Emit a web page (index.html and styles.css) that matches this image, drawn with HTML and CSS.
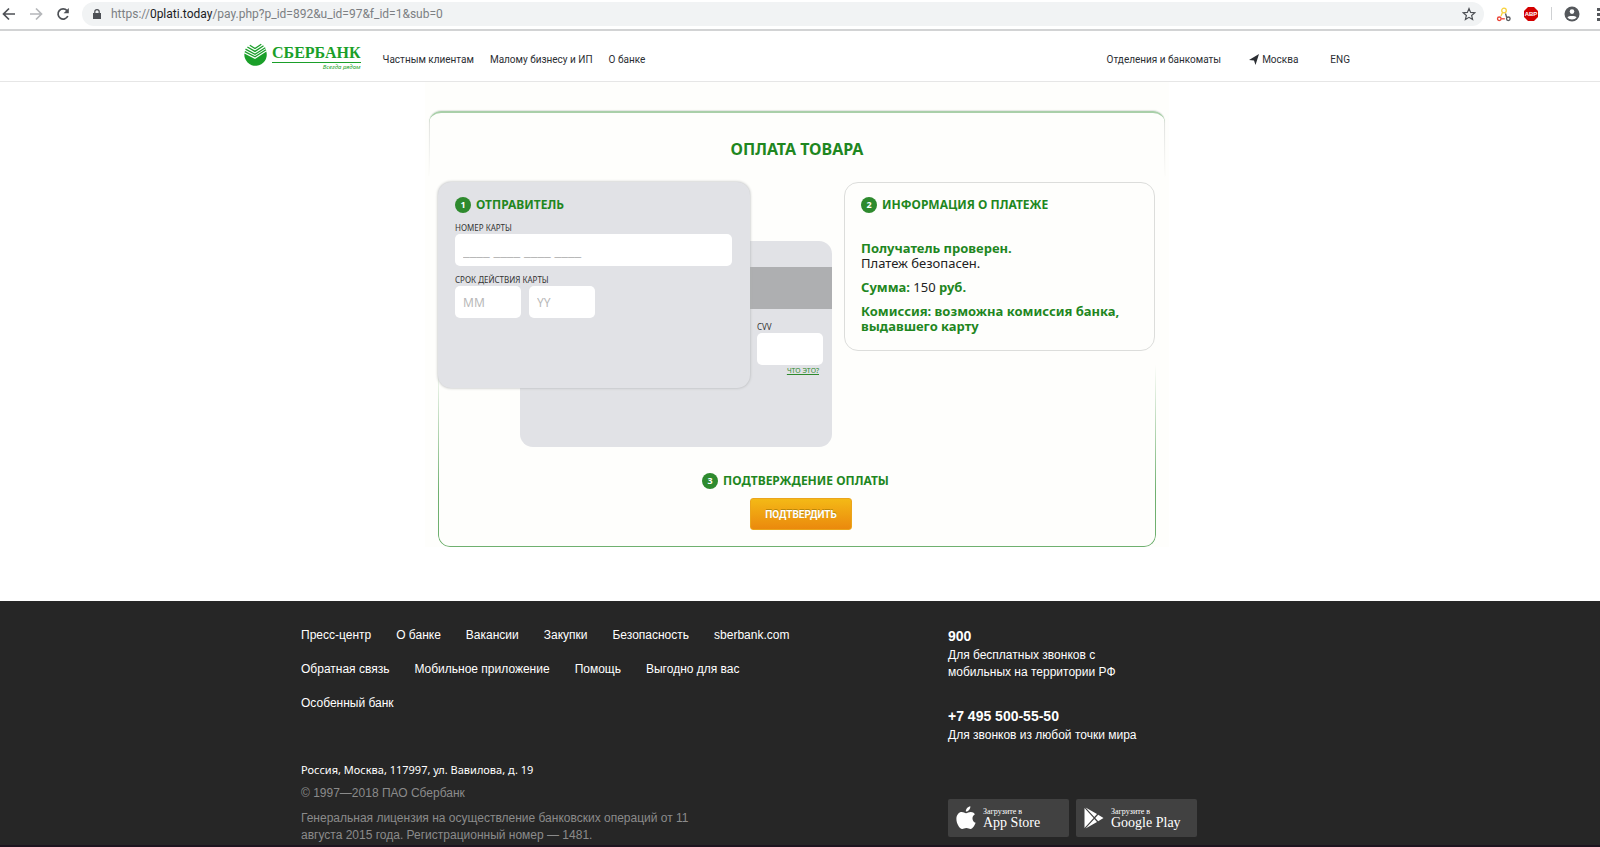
FILE: index.html
```html
<!DOCTYPE html>
<html lang="ru">
<head>
<meta charset="utf-8">
<title>Оплата товара</title>
<link rel="stylesheet" href="styles.css">
</head>
<body>
<div class="toolbar">
  <button class="tool" type="button" aria-label="Назад"><svg width="16" height="16" viewBox="0 0 16 16" fill="none" stroke="#4d5055" stroke-width="1.700"><path d="M14 8H3M8 2.500 2.500 8l5.500 5.500"/></svg></button>
  <button class="tool" type="button" aria-label="Вперёд"><svg width="16" height="16" viewBox="0 0 16 16" fill="none" stroke="#b5b7ba" stroke-width="1.700"><path d="M2 8h11M8 2.500 13.500 8 8 13.500"/></svg></button>
  <button class="tool" type="button" aria-label="Обновить"><svg width="16" height="16" viewBox="0 0 16 16" fill="none" stroke="#4d5055" stroke-width="1.700"><path d="M12.800 10A5.100 5.100 0 1 1 12 4.600"/><path d="M13.800 2v5.200H8.600z" fill="#4d5055" stroke="none"/></svg></button>
  <div class="address">
    <svg width="8" height="10" viewBox="0 0 8 10"><path d="M0 4h8v6H0z" fill="#4d5055"/><path d="M1.800 4.400V2.800a2.200 2.200 0 0 1 4.400 0v1.600" fill="none" stroke="#4d5055" stroke-width="1.200"/></svg>
    <span class="url">https://<b>0plati.today</b>/pay.php?p_id=892&amp;u_id=97&amp;f_id=1&amp;sub=0</span>
    <svg class="star" width="14" height="14" viewBox="0 0 24 24" fill="none" stroke="#4d5055" stroke-width="2"><path d="m12 2.600 2.800 6.600 7.100.6-5.400 4.700 1.700 7-6.200-3.800-6.200 3.800 1.700-7L2.100 9.800l7.100-.6z"/></svg>
  </div>
  <svg class="ext" width="16" height="16" viewBox="0 0 16 16" fill="none" stroke-width="1.300"><circle cx="8" cy="4.500" r="2.300" stroke="#f8d23c"/><path d="M6.500 6.500 5 10" stroke="#f8d23c"/><circle cx="3.300" cy="12.800" r="1.800" stroke="#ea4335"/><path d="M5.300 12.800h3.500" stroke="#ea4335"/><circle cx="12.300" cy="12.800" r="1.800" stroke="#55585c"/><path d="m9.500 7.500 1.200 4" stroke="#55585c"/></svg>
  <svg class="ext" width="16" height="16" viewBox="0 0 16 16"><path d="M5 1h6l4 4v6l-4 4H5l-4-4V5z" fill="#d40000"/><text class="abp" x="8" y="10" text-anchor="middle">ABP</text></svg>
  <span class="divider"></span>
  <svg class="user" width="16" height="16" viewBox="0 0 16 16"><circle cx="8" cy="8" r="7.500" fill="#55585c"/><circle cx="8" cy="5.600" r="2.300" fill="#fff"/><path d="M3.400 11.200c1-1.700 8.200-1.700 9.200 0-2 3-7.200 3-9.200 0z" fill="#fff"/></svg>
  <svg class="dots" width="3" height="14" viewBox="0 0 3 14" fill="#55585c"><path d="M0 1h3v3H0zM0 6h3v3H0zM0 11h3v3H0z"/></svg>
</div>

<header class="header">
  <div class="header-in">
    <a class="logo" href="#">
      <svg width="24" height="24" viewBox="0 0 24 24"><path d="M.4 10.500 11 16 22.300 8.500A11.200 11.200 0 1 1 .4 10.500z" fill="#1a9f29"/><g fill="none" stroke="#1a9f29" stroke-width="1.300"><path d="m.8 8.600 10.200 5.200L22 6.700M1.500 6.100l9.500 5.200 10.300-6.600M3.400 4l7.600 4.400 8.500-5.700M5.800 2.300 11 5.500 17.300 1.200"/></g></svg>
      <span class="logo-text"><span class="logo-name">СБЕРБАНК</span><span class="logo-tag">Всегда рядом</span></span>
    </a>
    <nav class="nav"><a href="#">Частным клиентам</a><a href="#">Малому бизнесу и ИП</a><a href="#">О банке</a></nav>
    <nav class="nav nav-right"><a href="#">Отделения и банкоматы</a><a class="city" href="#"><svg width="10" height="11" viewBox="0 0 10 11"><path d="M10 0 6.500 11 5 6.500 0 6z" fill="#2b2e33"/></svg>Москва</a><a href="#">ENG</a></nav>
  </div>
</header>

<main class="main">
  <div class="sheet">
    <div class="top-frame"><h1>ОПЛАТА ТОВАРА</h1></div>
    <form class="pay">
      <div class="row">
        <div class="cards">
          <section class="card back">
            <div class="stripe"></div>
            <div class="cvv">
              <label for="cvv">CVV</label>
              <input id="cvv" type="text" autocomplete="off">
              <a href="#">ЧТО ЭТО?</a>
            </div>
          </section>
          <section class="card front">
            <h2><span class="num">1</span>ОТПРАВИТЕЛЬ</h2>
            <label for="pan">НОМЕР КАРТЫ</label>
            <input id="pan" class="pan" type="text" placeholder="____ ____ ____ ____" autocomplete="off">
            <label for="mm">СРОК ДЕЙСТВИЯ КАРТЫ</label>
            <div class="dates">
              <input id="mm" type="text" placeholder="MM" autocomplete="off">
              <input id="yy" type="text" placeholder="YY" aria-label="Год" autocomplete="off">
            </div>
          </section>
        </div>
        <section class="info">
          <h2><span class="num">2</span>ИНФОРМАЦИЯ О ПЛАТЕЖЕ</h2>
          <p class="first"><b>Получатель проверен.</b><br>Платеж безопасен.</p>
          <p><b>Сумма:</b> 150 <b>руб.</b></p>
          <p><b>Комиссия: возможна комиссия банка, выдавшего карту</b></p>
        </section>
      </div>
      <div class="confirm">
        <h2><span class="num">3</span>ПОДТВЕРЖДЕНИЕ ОПЛАТЫ</h2>
        <button class="submit" type="button">ПОДТВЕРДИТЬ</button>
      </div>
    </form>
  </div>
</main>

<footer class="footer">
  <div class="footer-in">
    <div class="left">
      <nav class="links"><a href="#">Пресс-центр</a><a href="#">О банке</a><a href="#">Вакансии</a><a href="#">Закупки</a><a href="#">Безопасность</a><a href="#">sberbank.com</a><a href="#">Обратная связь</a><a href="#">Мобильное приложение</a><a href="#">Помощь</a><a href="#">Выгодно для вас</a><a href="#">Особенный банк</a></nav>
      <p class="addr">Россия, Москва, 117997, ул. Вавилова, д. 19</p>
      <p class="grey">© 1997—2018 ПАО Сбербанк</p>
      <p class="grey license">Генеральная лицензия на осуществление банковских операций от 11 августа 2015 года. Регистрационный номер — 1481.</p>
    </div>
    <div class="right">
      <p class="phone">900</p>
      <p class="note">Для бесплатных звонков с<br>мобильных на территории РФ</p>
      <p class="phone second">+7 495 500-55-50</p>
      <p class="note">Для звонков из любой точки мира</p>
      <div class="stores">
        <a class="store" href="#"><svg width="20" height="24" viewBox="0 0 20 24" fill="#fff"><path d="M10 7.200c1.500 0 2.600-1.200 4.800-1.200 1.700 0 3.200.9 4.100 2.200-3.600 2.100-3 7.100.7 8.600-.9 2.500-2.800 6-5 6.200-1.500 0-2.200-1-4.200-1s-2.800 1-4.200 1C3.400 22.900.4 17.400.4 13c0-4.300 2.600-7 5.300-7C7.500 6 8.900 7.200 10 7.200z"/><path d="M9.800 5.600C9.700 3 11.700.6 14.300.2 14.600 2.900 12.400 5.500 9.800 5.600z"/></svg><span class="store-text"><small>Загрузите в</small><span>App Store</span></span></a>
        <a class="store" href="#"><svg width="20" height="22" viewBox="0 0 20 22" fill="#fff"><path d="M.5 1v20L9.600 11z"/><path d="M1.500.4 10.300 10l2.700-3zM1.500 21.600 10.300 12l2.700 3zM14.200 7.700 11.200 11l3 3.300 5.300-3.300z"/></svg><span class="store-text"><small>Загрузите в</small><span>Google Play</span></span></a>
      </div>
    </div>
  </div>
</footer>
</body>
</html>
```
FILE: styles.css
```css
* { box-sizing: border-box; }
body { margin: 0; min-height: 100vh; display: flex; flex-direction: column; background: #fff; color: #222; font-family: "Noto Sans", sans-serif; font-size: 12px; overflow: hidden; }
h1, h2, p { margin: 0; }
a { color: inherit; text-decoration: none; }
svg { flex: none; display: block; }

.toolbar { display: flex; align-items: center; height: 31px; padding: 0 0 2px 1px; border-bottom: 2px solid #d2d3d4; overflow: hidden; }
.tool { width: 16px; height: 16px; margin-right: 11px; padding: 0; border: 0; background: none; flex: none; }
.address { display: flex; align-items: center; gap: 10px; flex: 1; height: 24px; padding: 0 8px 0 11px; border-radius: 12px; background: #f1f3f4; }
.url { flex: 1; color: #7c7f83; font-family: Roboto, sans-serif; font-size: 12px; }
.url b { color: #202124; font-weight: 400; }
.ext { margin-left: 12px; }
.ext + .ext { margin-left: 11px; }
.abp { fill: #fff; font: bold 6px "Liberation Sans", sans-serif; }
.divider { width: 1px; height: 13px; margin: 0 12px; background: #cfd1d3; }
.dots { margin-left: 17px; }

.header { height: 51px; padding-right: 6px; border-bottom: 1px solid #e6e6e6; }
.header-in { display: flex; align-items: center; max-width: 1106px; height: 50px; margin: 0 auto; padding-top: 3px; }
.logo { display: flex; gap: 4px; align-items: flex-start; margin-right: 22px; color: #1a9f29; }
.logo-text { display: flex; flex-direction: column; }
.logo-name { border-bottom: 1px solid #1a9f29; font: bold 16px/19px "Liberation Serif", serif; }
.logo-tag { align-self: flex-end; font: italic 6px/9px "Noto Sans", sans-serif; }
.nav { display: flex; align-items: center; gap: 16px; padding-top: 3px; color: #2b2e33; font-family: Roboto, sans-serif; font-size: 10px; }
.nav-right { gap: 32px; margin-left: auto; }
.city { display: flex; align-items: center; gap: 3px; margin-left: -4px; }

.main { flex: none; padding: 0 6px 54px 0; }
.sheet { max-width: 744px; margin: 0 auto; padding: 29px 4px 0; background: #fefefc; }
.top-frame { height: 66px; border-radius: 12px 12px 0 0; border-top: 2px solid #a9cfa9; padding-top: 24px; background: linear-gradient(#dcdedb, #fefefc) left / 1px 100% no-repeat, linear-gradient(#dcdedb, #fefefc) right / 1px 100% no-repeat; box-shadow: 0 -1px 1px #e3e5e2; text-align: center; }
h1, h2, .info b { color: #1f871f; font-weight: 700; }
h1 { font-size: 16px; line-height: 24px; }
h2 { display: flex; align-items: center; gap: 5px; font-size: 12px; line-height: 16px; }
.num { width: 16px; height: 16px; border-radius: 50%; background: #2e8a2e; color: #fff; font-size: 9px; text-align: center; }
.pay { position: relative; margin: 5px 9px 0; padding: 0 1px 1px; }
.pay::before { content: ""; position: absolute; inset: 0; border: 1px solid #6fb06f; border-top: 0; border-radius: 0 0 12px 12px; -webkit-mask-image: linear-gradient(transparent 50%, #000 85%); mask-image: linear-gradient(transparent 50%, #000 85%); pointer-events: none; }
.row { display: flex; justify-content: space-between; align-items: flex-start; }
.cards { display: grid; width: 395px; margin-left: -1px; }
.card { grid-area: 1 / 1; width: 312px; height: 206px; border-radius: 13px; background: #e1e2e6; }
.front { position: relative; padding: 15px 18px 0 17px; box-shadow: 0 0 3px #aeb0b1; }
.back { margin: 59px 0 0 82px; padding-top: 26px; }
.stripe { height: 42px; background: #aeafb1; }
.cvv { width: 66px; margin: 12px 9px 0 auto; }
.cvv a { display: block; padding: 1px 4px 0 0; color: #2e8a2e; font-size: 7px; line-height: 10px; text-align: right; text-decoration: underline; }
label { display: block; color: #333; font-size: 8px; line-height: 12px; }
input { display: block; width: 66px; height: 32px; padding: 0 8px; border: 0; border-radius: 5px; background: #fff; font: 12px "Noto Sans", sans-serif; }
input::placeholder { color: #b8b8b8; opacity: 1; }
.front h2 { margin-bottom: 9px; }
.pan { width: 100%; margin-bottom: 8px; font-size: 15px; line-height: 18px; }
.dates { display: flex; gap: 8px; }
.info { width: 311px; padding: 14px 16px 16px; border: 1px solid #dcdddb; border-radius: 14px; color: #222; font-size: 13px; line-height: 15px; }
.info p { margin-top: 9px; }
.info .first { margin-top: 28px; }
.confirm { display: flex; flex-direction: column; align-items: center; gap: 9px; padding: 26px 0 16px; }
.confirm h2 { margin-right: 3px; }
.submit { width: 102px; height: 32px; margin-left: 8px; padding: 0; border: 1px solid #eba51c; border-radius: 3px; background: linear-gradient(#f4b916, #eb890d); color: #fff; font: bold 10px Roboto, sans-serif; text-shadow: 0 -1px 0 #b8860b; }

.footer { flex: 1; padding-right: 6px; background: #262626; border-bottom: 2px solid #1d141f; color: #fff; font: 12px/17px "Liberation Sans", sans-serif; }
.footer-in { display: flex; max-width: 992px; margin: 0 auto; padding-top: 25px; }
.left { width: 647px; padding-top: 1px; }
.links { display: flex; flex-wrap: wrap; gap: 17px 25px; max-width: 500px; margin-bottom: 49px; }
.addr { font: 11px/17px "Noto Sans", sans-serif; }
.grey { margin-top: 7px; color: #8b8b8b; }
.license { max-width: 400px; margin-top: 8px; }
.phone { font-weight: 700; font-size: 14px; line-height: 20px; }
.note { padding-top: 1px; }
.second { margin-top: 25px; }
.stores { display: flex; gap: 7px; margin-top: 55px; }
.store { display: flex; align-items: center; gap: 7px; width: 121px; height: 38px; padding-left: 8px; border-radius: 2px; background: #414141; font-family: "Liberation Serif", serif; }
.store-text { display: flex; flex-direction: column; font-size: 14px; line-height: 14px; }
.store small { font-size: 8px; line-height: 9px; }
```
